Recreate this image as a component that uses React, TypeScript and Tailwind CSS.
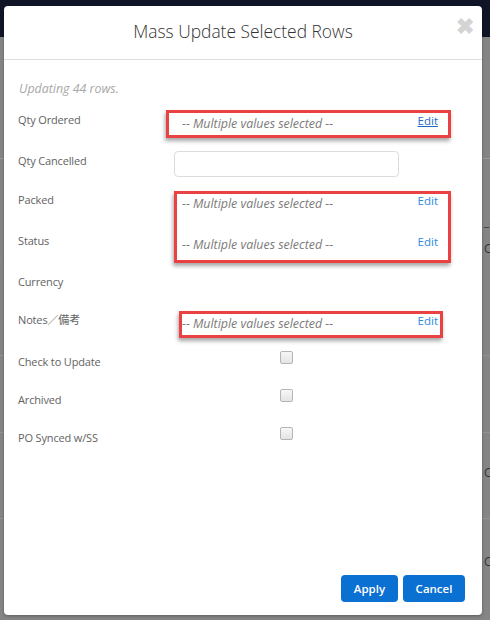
import React from "react";

const font = { fontFamily: '"Open Sans", "Noto Sans CJK JP", sans-serif' };

function Label({ children }: { children: React.ReactNode }) {
  return (
    <div className="w-[156px] shrink-0 text-[11px] leading-[16px] tracking-[-0.15px] text-[#626262]">{children}</div>
  );
}

function Multi({ underline = false }: { underline?: boolean }) {
  return (
    <div className="flex w-[264px] items-start justify-between pl-[8px]">
      <span className="mt-[4px] text-[12.4px] italic leading-[16px] text-[#7a7a7a]">-- Multiple values selected --</span>
      <span
        className={
          "mt-[1px] text-[11.5px] leading-[16px] " +
          (underline ? "text-[#1b6cc8] underline" : "text-[#2d8ae0]")
        }
      >
        Edit
      </span>
    </div>
  );
}

function Check() {
  return (
    <div className="ml-[106px] mt-[-3px] h-[13px] w-[13px] rounded-[2px] border border-[#b5b5b5] bg-gradient-to-b from-[#f7f7f7] to-[#e4e4e4]" />
  );
}

export default function App() {
  return (
    <div style={font} className="relative h-[620px] w-[490px] overflow-hidden bg-[#858585]">
      <div className="h-[37px] bg-[#0f1527]" />
      {/* faint background page lines */}
      <div className="absolute left-0 top-[158px] h-px w-[490px] bg-[#999]" />
      <div className="absolute left-0 top-[355px] h-px w-[490px] bg-[#939393]" />
      <div className="absolute left-0 top-[432px] h-px w-[490px] bg-[#939393]" />
      <div className="absolute left-0 top-[518px] h-px w-[490px] bg-[#939393]" />
      <div className="absolute left-[484px] top-[464px] text-[12px] text-[#333]">C</div>
      <div className="absolute left-[484px] top-[553px] text-[12px] text-[#333]">C</div>
      <div className="absolute left-[484px] top-[213px] text-[12px] text-[#333]">_C</div>
      <div className="absolute left-[484px] top-[240px] text-[12px] text-[#333]">C</div>
      <div className="absolute left-[-6px] top-[250px] text-[12px] text-[#b5651d]">a</div>

      {/* modal */}
      <div className="absolute left-[4px] top-[6px] flex h-[609px] w-[478px] flex-col rounded-[4px] bg-white shadow-[0_1px_3px_rgba(0,0,0,0.3)]">
        <div className="relative flex h-[54px] items-center justify-center border-b border-[#dedede]">
          <h1 className="mt-[-2px] text-[17.4px] font-light text-[#333]">Mass Update Selected Rows</h1>
          <span className="absolute right-[8px] top-[7px] text-[22px] font-bold leading-[24px] text-[#d4d4d4]">✖</span>
        </div>
        <div className="flex-1 pl-[14px] pt-[21px]">
          <div className="pl-[1px] text-[12.4px] italic leading-[16px] text-[#a8a8a8]">Updating 44 rows.</div>
          <div className="mt-[15px] flex h-[41px] items-start">
            <Label>Qty Ordered</Label>
            <Multi underline />
          </div>
          <div className="flex h-[39px] items-start">
            <Label>Qty Cancelled</Label>
            <div className="mt-[-2px] h-[26px] w-[225px] rounded-[4px] border border-[#dcdcdc] bg-white" />
          </div>
          <div className="flex h-[41px] items-start">
            <Label>Packed</Label>
            <Multi />
          </div>
          <div className="flex h-[41px] items-start">
            <Label>Status</Label>
            <Multi />
          </div>
          <div className="flex h-[38px] items-start">
            <Label>Currency</Label>
          </div>
          <div className="flex h-[42px] items-start">
            <Label>Notes／備考</Label>
            <Multi />
          </div>
          <div className="flex h-[38px] items-start">
            <Label>Check to Update</Label>
            <Check />
          </div>
          <div className="flex h-[38px] items-start">
            <Label>Archived</Label>
            <Check />
          </div>
          <div className="flex h-[38px] items-start">
            <Label>PO Synced w/SS</Label>
            <Check />
          </div>
        </div>
        <div className="flex justify-end gap-[5px] pb-[13px] pr-[17px]">
          <button className="h-[27px] w-[57px] rounded-[4px] bg-[#0a70d2] text-[11.5px] font-semibold text-white">Apply</button>
          <button className="h-[27px] w-[62px] rounded-[4px] bg-[#0a70d2] text-[11.5px] font-semibold text-white">Cancel</button>
        </div>
      </div>

      {/* red annotation boxes */}
      <div className="absolute left-[166px] top-[110px] h-[28px] w-[285px] border-[3px] border-[#ea4242] shadow-[-1px_3px_4px_rgba(0,0,0,0.35)]" />
      <div className="absolute left-[174px] top-[191px] h-[72px] w-[277px] border-[3px] border-[#ea4242] shadow-[-1px_3px_4px_rgba(0,0,0,0.35)]" />
      <div className="absolute left-[179px] top-[311px] h-[27px] w-[264px] border-[3px] border-[#ea4242] shadow-[-1px_3px_4px_rgba(0,0,0,0.35)]" />
    </div>
  );
}
